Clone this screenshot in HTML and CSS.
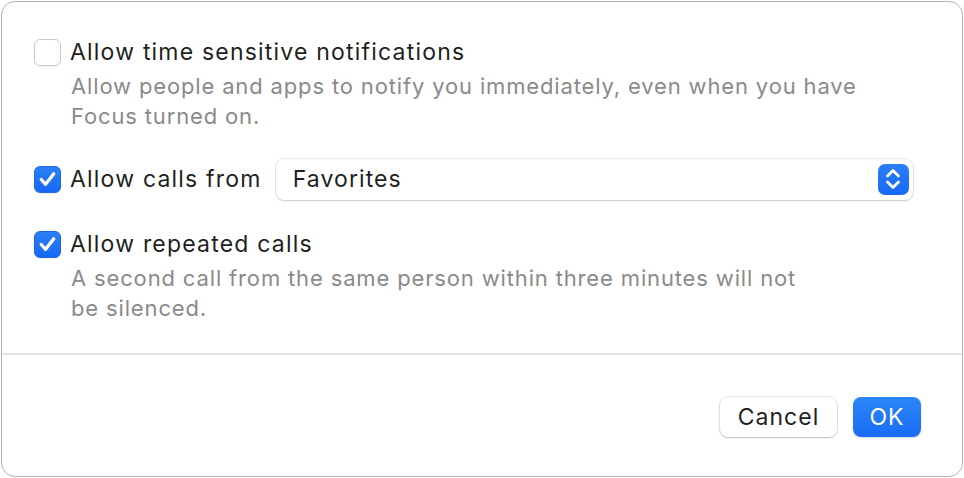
FILE: index.html
```html
<!DOCTYPE html>
<html lang="en">
<head>
    <meta charset="UTF-8">
    <title>Focus options</title>
    <link rel="stylesheet" href="styles.css">
</head>
<body>
    <div class="dialog">
        <div class="options">
            <div class="option">
                <div class="option-row">
                    <span class="check"></span>
                    <span class="label">Allow time sensitive notifications</span>
                </div>
                <p class="desc">Allow people and apps to notify you immediately, even when you have<br>Focus turned on.</p>
            </div>

            <div class="option">
                <div class="option-row">
                    <span class="check on">
                        <svg viewBox="0 0 26 26" width="26" height="26"><path d="M6.5 13.5 L11 18.5 L19.5 7.5" fill="none" stroke="#fff" stroke-width="3.4" stroke-linecap="round" stroke-linejoin="round"/></svg>
                    </span>
                    <span class="label">Allow calls from</span>
                    <div class="popup">
                        <span>Favorites</span>
                        <span class="stepper">
                            <svg viewBox="0 0 30 30" width="30" height="30"><path d="M9.5 12 L15 6.5 L20.5 12 M9.5 18 L15 23.5 L20.5 18" fill="none" stroke="#fff" stroke-width="2.8" stroke-linecap="round" stroke-linejoin="round"/></svg>
                        </span>
                    </div>
                </div>
            </div>

            <div class="option">
                <div class="option-row">
                    <span class="check on">
                        <svg viewBox="0 0 26 26" width="26" height="26"><path d="M6.5 13.5 L11 18.5 L19.5 7.5" fill="none" stroke="#fff" stroke-width="3.4" stroke-linecap="round" stroke-linejoin="round"/></svg>
                    </span>
                    <span class="label">Allow repeated calls</span>
                </div>
                <p class="desc">A second call from the same person within three minutes will not<br>be silenced.</p>
            </div>
        </div>

        <div class="footer">
            <button class="btn">Cancel</button>
            <button class="btn primary">OK</button>
        </div>
    </div>
</body>
</html>
```

FILE: styles.css
```css
body {
    margin: 0;
    padding: 1px;
    background-color: #ffffff;
    font-family: Inter, "Liberation Sans", sans-serif;
    color: #1f1f1f;
}
.dialog {
    width: 962px;
    height: 476px;
    border: 1px solid #b4b4b4;
    border-radius: 14px;
    background-color: #ffffff;
    display: flex;
    flex-direction: column;
    box-sizing: border-box;
}
.options {
    padding: 36px 0 0 32px;
    height: 353px;
    box-sizing: border-box;
    border-bottom: 2px solid #e6e6e6;
}
.option {
    margin-bottom: 34px;
}
.option:nth-child(2) {
    margin-bottom: 37px;
}
.option-row {
    display: flex;
    align-items: center;
    height: 28px;
}
.check {
    width: 25px;
    height: 25px;
    border: 1px solid #c9c9c9;
    border-radius: 6px;
    background-color: #ffffff;
    box-sizing: content-box;
    display: flex;
    align-items: center;
    justify-content: center;
    margin-right: 9px;
    box-shadow: 0 1px 1px rgba(0, 0, 0, 0.05);
}
.check.on {
    background: linear-gradient(#2a80f7, #1768f5);
    border-color: #1a6ae8;
}
.label {
    font-size: 23px;
    letter-spacing: 1.2px;
}
.desc {
    margin: 5px 0 0 37px;
    font-size: 22px;
    letter-spacing: 0.85px;
    line-height: 30px;
    color: #8a8a8a;
}
.popup {
    margin-left: 14px;
    width: 637px;
    height: 41px;
    box-sizing: border-box;
    border-radius: 8px;
    background-color: #ffffff;
    box-shadow: 0 0 0 1px rgba(0, 0, 0, 0.07), 0 1px 2px rgba(0, 0, 0, 0.15);
    display: flex;
    align-items: center;
    justify-content: space-between;
    padding: 0 4px 0 17px;
    font-size: 23px;
    letter-spacing: 1.1px;
}
.stepper {
    width: 31px;
    height: 31px;
    border-radius: 7px;
    background: linear-gradient(#2a80f7, #1768f5);
    display: flex;
    align-items: center;
    justify-content: center;
}
.footer {
    flex-grow: 1;
    display: flex;
    justify-content: flex-end;
    align-items: center;
    gap: 16px;
    padding: 0 41px 0 0;
    margin-top: 2px;
}
.btn {
    font-family: Inter, "Liberation Sans", sans-serif;
    font-size: 23px;
    letter-spacing: 1px;
    height: 40px;
    padding: 0;
    border: none;
    border-radius: 8px;
    background-color: #ffffff;
    color: #1f1f1f;
    box-shadow: 0 0 0 1px rgba(0, 0, 0, 0.08), 0 1px 2px rgba(0, 0, 0, 0.2);
}
.btn:first-child {
    width: 117px;
}
.btn.primary {
    width: 68px;
    background: linear-gradient(#2b86f8, #1a6cf5);
    color: #ffffff;
    box-shadow: 0 1px 2px rgba(0, 0, 0, 0.15);
}
```
